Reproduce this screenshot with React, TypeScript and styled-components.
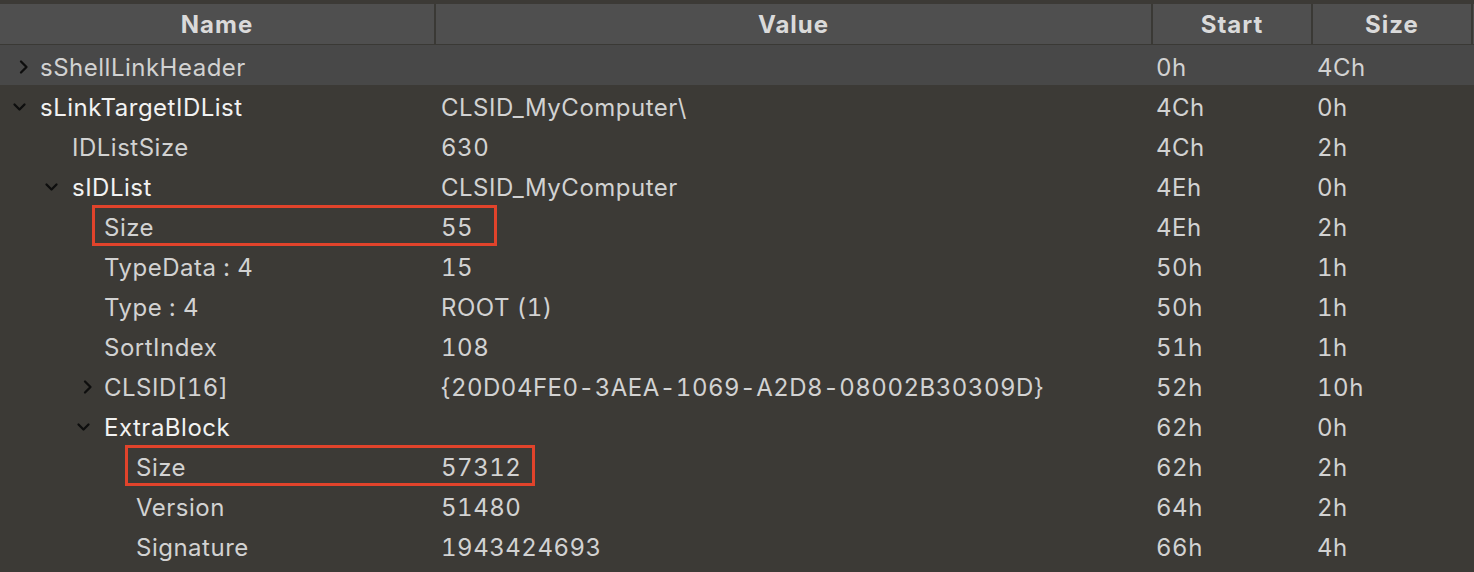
import React from "react";
import styled, { createGlobalStyle } from "styled-components";

const Global = createGlobalStyle`
  html, body { margin: 0; padding: 0; background: #3c3a36; }
  body { font-family: Inter, "Noto Sans", sans-serif; overflow: hidden; }
`;

const COLS = "434px 715px 158px 158px 1fr";

const Page = styled.div`
  width: 1474px;
  height: 572px;
  background: #3c3a36;
  padding-top: 4px;
  box-sizing: border-box;
  overflow: hidden;
  font-variant-numeric: tabular-nums;
`;

const Header = styled.div`
  display: grid;
  grid-template-columns: ${COLS};
  column-gap: 2px;
  background: #3a3935;
  border-bottom: 1px solid #3a3935;
`;

const HeadCell = styled.div`
  height: 40px;
  background: #4f4f4f;
  color: #dadada;
  font-weight: 700;
  font-size: 24px;
  display: flex;
  align-items: center;
  justify-content: center;
  padding-top: 1px;
  box-sizing: border-box;
  letter-spacing: 1px;
`;

const Row = styled.div<{ $hl?: boolean }>`
  position: relative;
  display: grid;
  grid-template-columns: ${COLS};
  column-gap: 2px;
  height: 40px;
  background: ${(p) => (p.$hl ? "#484848" : "transparent")};
  font-size: 24px;
  letter-spacing: 0.5px;
  color: #d2d2d2;
`;

const Cell = styled.div<{ $pad?: number }>`
  display: flex;
  align-items: center;
  padding-left: ${(p) => p.$pad ?? 5}px;
  padding-top: 5px;
  box-sizing: border-box;
  white-space: nowrap;
`;

const NameCell = styled(Cell)<{ $level: number; $bright?: boolean }>`
  padding-left: ${(p) => 12 + p.$level * 32}px;
  color: ${(p) => (p.$bright ? "#f2f2f2" : "#d2d2d2")};
`;

const Toggle = styled.span`
  width: 28px;
  height: 20px;
  display: inline-flex;
  align-items: center;
  justify-content: flex-start;
  flex: none;
  margin-top: -2px;
`;

const Mark = styled.div<{ $left: number; $width: number }>`
  position: absolute;
  top: 0;
  left: ${(p) => p.$left}px;
  width: ${(p) => p.$width}px;
  height: 41px;
  border: 3px solid #e1432b;
  box-sizing: border-box;
  pointer-events: none;
`;

const Chevron = ({ open }: { open: boolean }) =>
  open ? (
    <svg width="15" height="10" viewBox="0 0 15 10">
      <path d="M2.5 2.5 L7.5 7.5 L12.5 2.5" fill="none" stroke="#0e0e0e" strokeWidth="2.3" strokeLinecap="round" strokeLinejoin="round" />
    </svg>
  ) : (
    <svg width="12" height="16" viewBox="0 0 12 16" style={{ marginLeft: 6 }}>
      <path d="M3 2.5 L8.5 8 L3 13.5" fill="none" stroke="#0e0e0e" strokeWidth="2.3" strokeLinecap="round" strokeLinejoin="round" />
    </svg>
  );

type Item = {
  name: string;
  level: number;
  toggle?: "open" | "closed";
  value?: string;
  start: string;
  size: string;
  hl?: boolean;
  mark?: [number, number];
};

const rows: Item[] = [
  { name: "sShellLinkHeader", level: 0, toggle: "closed", start: "0h", size: "4Ch", hl: true },
  { name: "sLinkTargetIDList", level: 0, toggle: "open", value: "CLSID_MyComputer\\", start: "4Ch", size: "0h" },
  { name: "IDListSize", level: 1, value: "630", start: "4Ch", size: "2h" },
  { name: "sIDList", level: 1, toggle: "open", value: "CLSID_MyComputer", start: "4Eh", size: "0h" },
  { name: "Size", level: 2, value: "55", start: "4Eh", size: "2h", mark: [92, 405] },
  { name: "TypeData : 4", level: 2, value: "15", start: "50h", size: "1h" },
  { name: "Type : 4", level: 2, value: "ROOT (1)", start: "50h", size: "1h" },
  { name: "SortIndex", level: 2, value: "108", start: "51h", size: "1h" },
  { name: "CLSID[16]", level: 2, toggle: "closed", value: "{20D04FE0-3AEA-1069-A2D8-08002B30309D}", start: "52h", size: "10h" },
  { name: "ExtraBlock", level: 2, toggle: "open", start: "62h", size: "0h" },
  { name: "Size", level: 3, value: "57312", start: "62h", size: "2h", mark: [125, 410] },
  { name: "Version", level: 3, value: "51480", start: "64h", size: "2h" },
  { name: "Signature", level: 3, value: "1943424693", start: "66h", size: "4h" },
];

export default function App() {
  return (
    <Page>
      <Global />
      <Header>
        <HeadCell>Name</HeadCell>
        <HeadCell>Value</HeadCell>
        <HeadCell>Start</HeadCell>
        <HeadCell>Size</HeadCell>
        <HeadCell />
      </Header>
      {rows.map((r, i) => (
        <Row key={i} $hl={r.hl}>
          <NameCell $level={r.level} $bright={r.toggle === "open"}>
            <Toggle>{r.toggle ? <Chevron open={r.toggle === "open"} /> : null}</Toggle>
            {r.name}
          </NameCell>
          <Cell $pad={5}>{r.value ?? ""}</Cell>
          <Cell $pad={3}>{r.start}</Cell>
          <Cell $pad={4}>{r.size}</Cell>
          <Cell />
          {r.mark ? <Mark $left={r.mark[0]} $width={r.mark[1]} /> : null}
        </Row>
      ))}
    </Page>
  );
}
